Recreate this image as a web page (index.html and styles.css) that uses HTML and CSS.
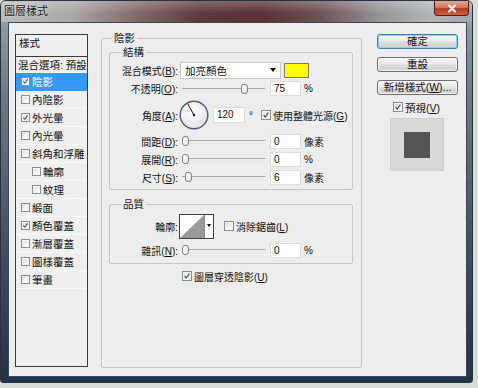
FILE: index.html
```html
<!DOCTYPE html>
<html>
<head>
<meta charset="utf-8">
<title>圖層樣式</title>
<link rel="stylesheet" href="styles.css">
</head>
<body>
<div class="window">
  <div class="titlebar">
    <span class="title">圖層樣式</span>
    <span class="close"><svg width="12" height="9" viewBox="0 0 12 9"><path d="M3 1.5 L9 7.5 M9 1.5 L3 7.5" stroke="#fff" stroke-width="2" stroke-linecap="round"/></svg></span>
  </div>
  <div class="client">
    <div class="stylelist">
      <div class="list-head">樣式</div>
      <div class="item first">混合選項: 預設</div>
      <div class="item selected"><span class="cb on"><svg viewBox="0 0 10 10"><path d="M2 5 L4 7.5 L8 2"/></svg></span>陰影</div>
      <div class="item"><span class="cb"></span>內陰影</div>
      <div class="item"><span class="cb on"><svg viewBox="0 0 10 10"><path d="M2 5 L4 7.5 L8 2"/></svg></span>外光暈</div>
      <div class="item"><span class="cb"></span>內光暈</div>
      <div class="item"><span class="cb"></span>斜角和浮雕</div>
      <div class="item sub"><span class="cb"></span>輪廓</div>
      <div class="item sub"><span class="cb"></span>紋理</div>
      <div class="item"><span class="cb"></span>緞面</div>
      <div class="item"><span class="cb on"><svg viewBox="0 0 10 10"><path d="M2 5 L4 7.5 L8 2"/></svg></span>顏色覆蓋</div>
      <div class="item"><span class="cb"></span>漸層覆蓋</div>
      <div class="item"><span class="cb"></span>圖樣覆蓋</div>
      <div class="item"><span class="cb"></span>筆畫</div>
    </div>

    <fieldset class="group main">
      <legend>陰影</legend>
      <fieldset class="group structure">
        <legend>結構</legend>
        <div class="row r1">
          <span class="lbl">混合模式(<u>B</u>):</span>
          <div class="select">加亮顏色<span class="arrow"></span></div>
          <span class="swatch"></span>
        </div>
        <div class="row r2">
          <span class="lbl">不透明(<u>O</u>):</span>
          <div class="slider"><span class="thumb" style="left:59px"></span></div>
          <span class="input">75</span>
          <span class="unit">%</span>
        </div>
        <div class="row r3">
          <span class="lbl">角度(<u>A</u>):</span>
          <svg class="dial" width="30" height="30" viewBox="0 0 30 30">
            <defs><radialGradient id="dg" cx="45%" cy="40%" r="65%"><stop offset="0" stop-color="#ffffff"/><stop offset="1" stop-color="#dfe3ea"/></radialGradient></defs>
            <circle cx="15" cy="15" r="13.8" fill="url(#dg)" stroke="#4d5b78" stroke-width="1.4"/>
            <line x1="15" y1="15" x2="8.6" y2="3.6" stroke="#111" stroke-width="1"/>
            <circle cx="15" cy="15" r="1.2" fill="#111"/>
          </svg>
          <span class="input angle">120</span>
          <span class="deg">°</span>
          <span class="cb on"><svg viewBox="0 0 10 10"><path d="M2 5 L4 7.5 L8 2"/></svg></span>
          <span class="cbtext">使用整體光源(<u>G</u>)</span>
        </div>
        <div class="row">
          <span class="lbl">間距(<u>D</u>):</span>
          <div class="slider"><span class="thumb" style="left:0px"></span></div>
          <span class="input">0</span>
          <span class="unit">像素</span>
        </div>
        <div class="row">
          <span class="lbl">展開(<u>R</u>):</span>
          <div class="slider"><span class="thumb" style="left:0px"></span></div>
          <span class="input">0</span>
          <span class="unit">%</span>
        </div>
        <div class="row">
          <span class="lbl">尺寸(<u>S</u>):</span>
          <div class="slider"><span class="thumb" style="left:3px"></span></div>
          <span class="input">6</span>
          <span class="unit">像素</span>
        </div>
      </fieldset>

      <fieldset class="group quality">
        <legend>品質</legend>
        <div class="row q1">
          <span class="lbl">輪廓:</span>
          <div class="contour">
            <svg class="curve" width="24" height="23" viewBox="0 0 24 23"><rect width="24" height="23" fill="#fff"/><path d="M0 23 L24 0 L24 23 Z" fill="#9a9a9a"/></svg>
            <span class="carrow"></span>
          </div>
          <span class="cb"></span>
          <span class="cbtext">消除鋸齒(<u>L</u>)</span>
        </div>
        <div class="row">
          <span class="lbl">雜訊(<u>N</u>):</span>
          <div class="slider"><span class="thumb" style="left:0px"></span></div>
          <span class="input">0</span>
          <span class="unit">%</span>
        </div>
      </fieldset>

      <div class="row knock">
        <span class="cb on"><svg viewBox="0 0 10 10"><path d="M2 5 L4 7.5 L8 2"/></svg></span>
        <span class="cbtext">圖層穿透陰影(<u>U</u>)</span>
      </div>
    </fieldset>

    <div class="buttons">
      <div class="btn default">確定</div>
      <div class="btn">重設</div>
      <div class="btn">新增樣式(<u>W</u>)...</div>
      <div class="preview-check">
        <span class="cb on"><svg viewBox="0 0 10 10"><path d="M2 5 L4 7.5 L8 2"/></svg></span>
        <span class="cbtext">預視(<u>V</u>)</span>
      </div>
      <div class="preview"><span class="preview-square"></span></div>
    </div>
  </div>
</div>
</body>
</html>
```

FILE: styles.css
```css
* { box-sizing: border-box; }
html, body { margin: 0; padding: 0; }
body {
  width: 478px;
  height: 388px;
  overflow: hidden;
  background: #dadfd6;
  font-family: "Liberation Sans", "Noto Sans CJK TC", sans-serif;
  font-size: 10px;
  color: #111;
}
u { text-decoration: underline; text-underline-offset: 1px; }

.window {
  width: 473px;
  height: 383px;
  border: 1px solid #28323e;
  border-radius: 6px 6px 3px 3px;
  background: linear-gradient(180deg, #9ea4a8 0%, #6d7884 25%, #3a4a60 70%, #22324a 100%);
  display: flex;
  flex-direction: column;
  overflow: hidden;
}
.titlebar {
  height: 21px;
  flex: none;
  display: flex;
  justify-content: space-between;
  align-items: flex-start;
  background:
    linear-gradient(180deg, rgba(255,255,255,.25) 0%, rgba(255,255,255,0) 60%),
    linear-gradient(90deg, #b7bcba 0px, #aaa8a8 70px, #806466 140px, #5c383c 200px, #5a3034 260px, #6c5256 320px, #979599 380px, #b1b6ba 430px, #9ea6ac 472px);
}
.title {
  padding: 4px 0 0 3px;
  font-size: 11px;
  line-height: 13px;
  color: #1c1c1c;
  text-shadow: 0 0 3px rgba(255,255,255,.8);
}
.close {
  width: 35px;
  height: 15px;
  margin-right: 3px;
  border: 1px solid #5a1a14;
  border-top: none;
  border-radius: 0 0 4px 4px;
  background: linear-gradient(180deg, #e8a493 0%, #d87a64 45%, #b53a22 55%, #d0603f 100%);
  display: flex;
  align-items: center;
  justify-content: center;
}
.close svg { display: block; }

.client {
  flex: none;
  width: 459px;
  height: 355px;
  margin: 0 0 0 7px;
  background: #ededed;
  border: 1px solid #3b4654;
  padding: 11px 0 0 6px;
  display: flex;
  align-items: flex-start;
}

/* style list */
.stylelist {
  flex: none;
  width: 73px;
  height: 333px;
  border: 1px solid #3a3a3a;
  background: #efefef;
  font-size: 10.5px;
}
.list-head {
  height: 22px;
  border-bottom: 1px solid #3a3a3a;
  padding-left: 3px;
  line-height: 17px;
}
.item {
  height: 18px;
  display: flex;
  align-items: center;
  padding-left: 5px;
  white-space: nowrap;
  overflow: hidden;
  border-bottom: 1px solid #f8f8f8;
}
.item.first { height: 16px; padding-left: 2px; }
.item.sub { padding-left: 16px; }
.item.selected { background: #3399ff; color: #fff; border-bottom-color: #3399ff; }
.item .cb { margin-right: 2px; width: 9px; height: 9px; }

/* checkbox */
.cb {
  flex: none;
  display: inline-block;
  width: 10px;
  height: 10px;
  border: 1px solid #8b8d90;
  background: linear-gradient(135deg, #d9dadc 0%, #f4f4f4 60%, #ffffff 100%);
  box-shadow: inset 0 0 0 1px #f7f7f7;
}
.cb svg { display: block; width: 100%; height: 100%; }
.cb svg path { fill: none; stroke: #32498a; stroke-width: 1.5; }

/* group boxes */
.group {
  margin: 0;
  border: 1px solid #c6c6c6;
  border-radius: 2px;
  min-width: 0;
}
.group legend {
  font-size: 10.5px;
  line-height: 13px;
  padding: 0 2px;
}
.main {
  flex: none;
  width: 261px;
  height: 336px;
  margin: -2px 0 0 13px;
  padding: 0 8px 0 7px;
}
.main > legend { margin-left: 3px; }
.structure {
  margin-top: 1px;
  padding: 2px 0 3px 0;
}
.structure > legend, .quality > legend { margin-left: 11px; }
.quality {
  margin-top: 8px;
  padding: 1px 0 4px 0;
}

.row {
  display: flex;
  align-items: center;
  height: 18px;
}
.r2 { height: 19px; }
.r3 { height: 34px; }
.lbl {
  flex: none;
  width: 68px;
  margin-right: 2px;
  text-align: right;
  white-space: nowrap;
}
.select {
  flex: none;
  width: 101px;
  height: 17px;
  background: #fff;
  border: 1px solid #c9c9c9;
  padding-left: 4px;
  display: flex;
  align-items: center;
  justify-content: space-between;
  font-size: 10.5px;
}
.arrow {
  width: 0;
  height: 0;
  margin-right: 4px;
  border-left: 3.5px solid transparent;
  border-right: 3.5px solid transparent;
  border-top: 4px solid #000;
}
.swatch {
  flex: none;
  width: 25px;
  height: 15px;
  margin-left: 3px;
  background: #ffff00;
  border: 1px solid #7a7a7a;
}
.slider {
  flex: none;
  position: relative;
  width: 83px;
  height: 12px;
  margin-left: 2px;
}
.slider::before {
  content: "";
  position: absolute;
  left: 0;
  right: 0;
  top: 5px;
  height: 2px;
  border-top: 1px solid #a9a9a9;
  border-bottom: 1px solid #e6e6e6;
}
.thumb {
  position: absolute;
  top: 1px;
  width: 7px;
  height: 10px;
  border: 1px solid #7f7f7f;
  border-radius: 3px;
  background: linear-gradient(90deg, #ffffff 0%, #e8e8e8 100%);
}
.input {
  flex: none;
  width: 31px;
  height: 15px;
  margin-left: 5px;
  background: #fff;
  border: 1px solid #dcdcdc;
  padding-left: 3px;
  line-height: 13px;
  font-size: 10px;
}
.unit { margin-left: 3px; white-space: nowrap; }
.dial { flex: none; display: block; margin-left: -1px; }
.input.angle { width: 32px; height: 16px; margin-left: 4px; line-height: 14px; }
.deg { margin-left: 4px; width: 8px; }
.r3 .cb { margin-left: 4px; }
.cbtext { margin-left: 2px; white-space: nowrap; }

.q1 { height: 26px; margin-top: 1px; margin-bottom: 2px; }
.contour {
  flex: none;
  display: flex;
  width: 35px;
  height: 25px;
  margin-left: -1px;
  border: 1px solid #3f3f3f;
  background: #fff;
}
.curve { display: block; flex: none; }
.carrow {
  flex: 1;
  border-left: 1px solid #8a8a8a;
  position: relative;
}
.carrow::after {
  content: "";
  position: absolute;
  left: 2px;
  top: 9px;
  border-left: 2.5px solid transparent;
  border-right: 2.5px solid transparent;
  border-top: 3px solid #000;
}
.q1 .cb { margin-left: 10px; }

.knock { margin-top: 3px; padding-left: 73px; }

/* buttons */
.buttons {
  flex: none;
  width: 81px;
  margin-left: 15px;
  display: flex;
  flex-direction: column;
}
.btn {
  height: 15px;
  border: 1px solid #707070;
  border-radius: 3px;
  background: linear-gradient(180deg, #f4f4f4 0%, #ebebeb 48%, #dcdcdc 52%, #d0d0d0 100%);
  box-shadow: inset 0 0 0 1px rgba(255,255,255,.7);
  text-align: center;
  font-size: 10.5px;
  line-height: 13px;
  white-space: nowrap;
}
.btn + .btn { margin-top: 8px; }
.btn.default {
  border-color: #3c7fb1;
  box-shadow: inset 0 0 0 1px #8fd0f4;
}
.preview-check {
  display: flex;
  align-items: center;
  height: 14px;
  margin-top: 5px;
  padding-left: 16px;
  font-size: 10.5px;
}
.preview {
  margin: 4px 0 0 13px;
  width: 54px;
  height: 53px;
  background: #d9d9d9;
  border: 1px solid #cfcfcf;
  display: flex;
  align-items: center;
  justify-content: center;
}
.preview-square {
  width: 26px;
  height: 26px;
  background: #555555;
}
```
